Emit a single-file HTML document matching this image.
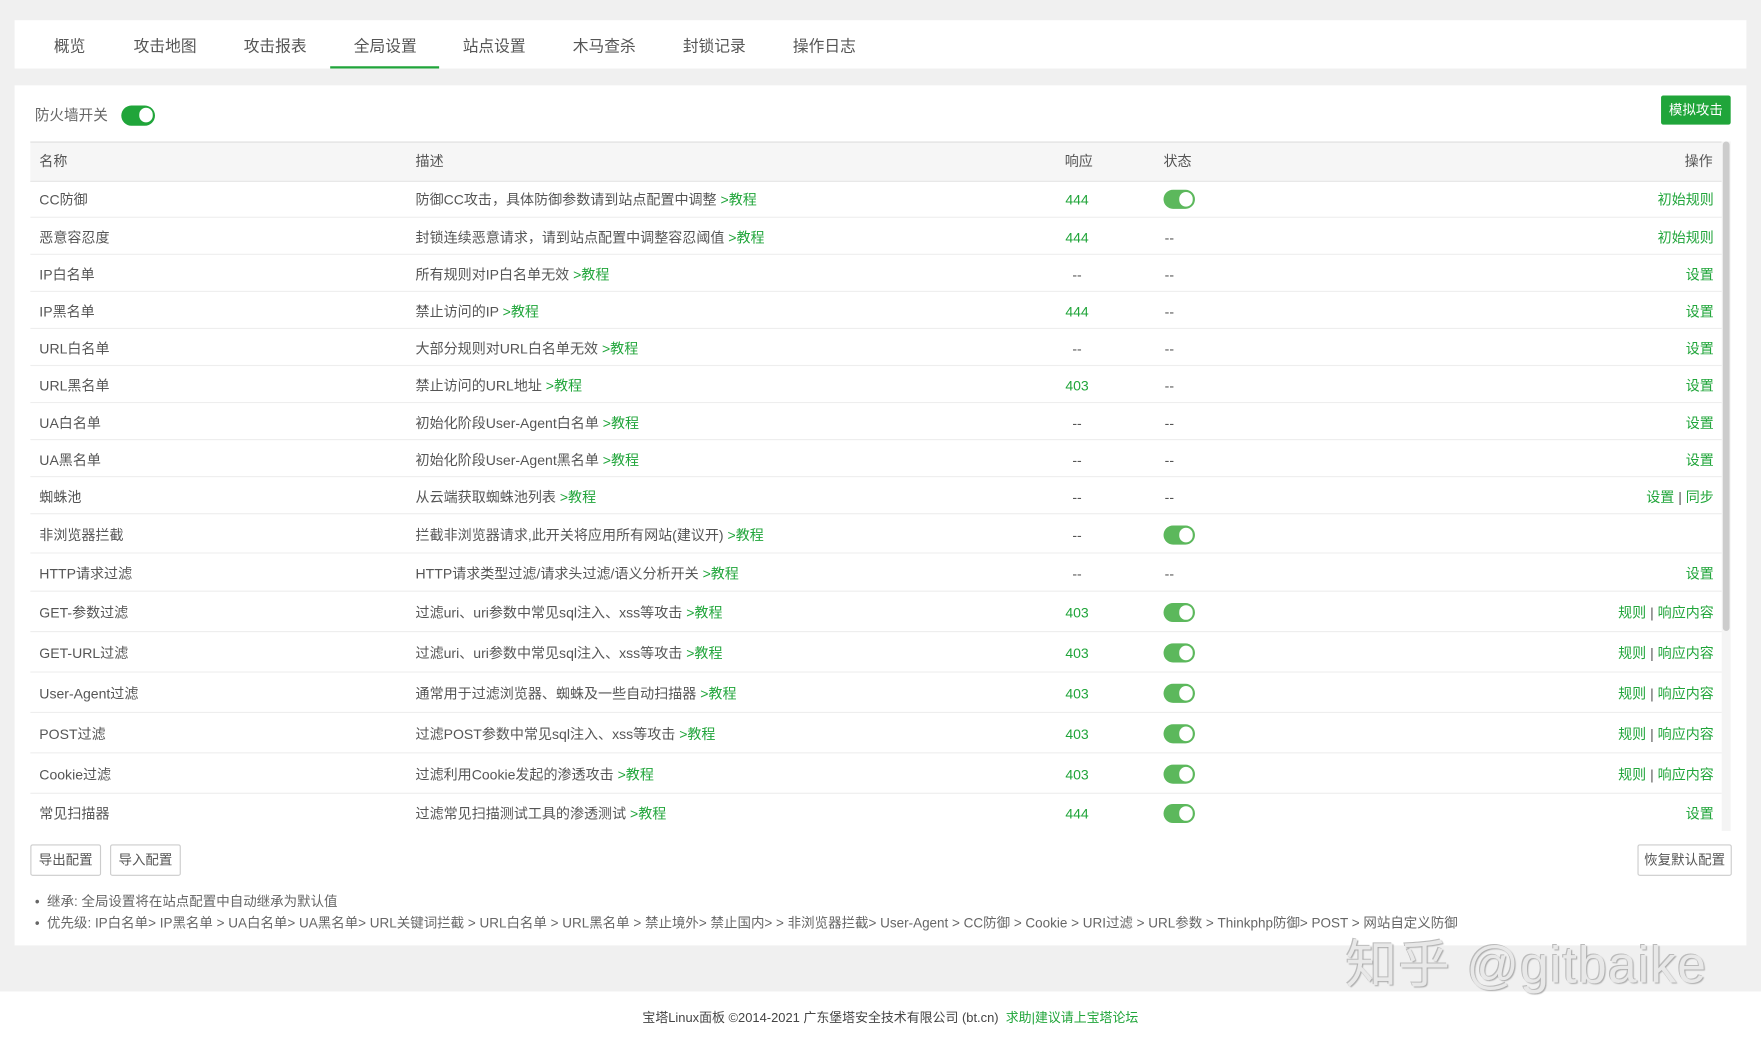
<!DOCTYPE html>
<html><head><meta charset="utf-8"><style>
html,body{margin:0;padding:0;width:1761px;height:1042px;overflow:hidden;background:#f0f0f0}
#w{position:absolute;left:0;top:0;width:1568px;height:928px;transform:scale(1.12309,1.12284);transform-origin:0 0;font-family:"Liberation Sans","Noto Sans CJK SC",sans-serif;font-size:12.5px;line-height:16px;color:#555}
.a{position:absolute;white-space:nowrap}
.g{color:#20a53a}
.tab{position:absolute;top:33px;font-size:14px;color:#555;transform:translateX(-50%)}
.tg{position:absolute;width:28px;height:17px;border-radius:9px;background:#5cb85c}
.tg::after{content:"";position:absolute;right:2px;top:2px;width:12px;height:13px;border-radius:7px;background:#fff}
.row{position:absolute;left:27px;width:1506px;border-bottom:1px solid #eee}
.btn{position:absolute;top:752px;height:26px;border:1px solid #ccc;border-radius:2px;background:#fff;font-size:12px;color:#555;line-height:26px;text-align:center}
</style></head><body><div id="w">
<div class="a" style="left:13px;top:18px;width:1542px;height:43px;background:#fff"></div>
<div class="tab" style="left:62px">概览</div>
<div class="tab" style="left:147px">攻击地图</div>
<div class="tab" style="left:245px">攻击报表</div>
<div class="tab g" style="left:343px">全局设置</div>
<div class="a" style="left:294px;top:59px;width:97px;height:2px;background:#20a53a"></div>
<div class="tab" style="left:440px">站点设置</div>
<div class="tab" style="left:538px">木马查杀</div>
<div class="tab" style="left:636px">封锁记录</div>
<div class="tab" style="left:734px">操作日志</div>

<div class="a" style="left:13px;top:76px;width:1542px;height:766px;background:#fff"></div>
<div class="a" style="left:31px;top:95px;font-size:13px;color:#666">防火墙开关</div>
<div class="tg" style="left:108px;top:94px;width:30px;height:18px;background:#20a53a"></div>
<div class="a" style="left:1479px;top:85px;width:62px;height:26px;background:#20a53a;border-radius:2px;color:#fff;font-size:12px;line-height:26px;text-align:center">模拟攻击</div>

<div class="a" style="left:27px;top:126px;width:1506px;height:34px;background:#f6f6f6;border-top:1px solid #ddd;border-bottom:1px solid #e6e6e6"></div>
<div class="a" style="left:1533px;top:126px;width:8px;height:614px;background:#f4f4f4"></div>
<div class="a" style="left:1534px;top:126px;width:6px;height:436px;background:#ccc;border-radius:3px"></div>
<div class="a" style="left:35px;top:136px">名称</div>
<div class="a" style="left:370px;top:136px">描述</div>
<div class="a" style="left:948px;top:136px">响应</div>
<div class="a" style="left:1036px;top:136px">状态</div>
<div class="a" style="left:1500px;top:136px">操作</div>

<div id="rows"></div>
<script>
var R=[
["CC防御","防御CC攻击，具体防御参数请到站点配置中调整","444",1,"初始规则",160,194],
["恶意容忍度","封锁连续恶意请求，请到站点配置中调整容忍阈值","444",0,"初始规则",194,227],
["IP白名单","所有规则对IP白名单无效","--",0,"设置",227,260],
["IP黑名单","禁止访问的IP","444",0,"设置",260,293],
["URL白名单","大部分规则对URL白名单无效","--",0,"设置",293,326],
["URL黑名单","禁止访问的URL地址","403",0,"设置",326,359],
["UA白名单","初始化阶段User-Agent白名单","--",0,"设置",359,392],
["UA黑名单","初始化阶段User-Agent黑名单","--",0,"设置",392,425],
["蜘蛛池","从云端获取蜘蛛池列表","--",0,"设置 <span style='color:#555'>|</span> 同步",425,458],
["非浏览器拦截","拦截非浏览器请求,此开关将应用所有网站(建议开)","--",1,"",458,493],
["HTTP请求过滤","HTTP请求类型过滤/请求头过滤/语义分析开关","--",0,"设置",493,527],
["GET-参数过滤","过滤uri、uri参数中常见sql注入、xss等攻击","403",1,"规则 <span style='color:#555'>|</span> 响应内容",527,563],
["GET-URL过滤","过滤uri、uri参数中常见sql注入、xss等攻击","403",1,"规则 <span style='color:#555'>|</span> 响应内容",563,599],
["User-Agent过滤","通常用于过滤浏览器、蜘蛛及一些自动扫描器","403",1,"规则 <span style='color:#555'>|</span> 响应内容",599,635],
["POST过滤","过滤POST参数中常见sql注入、xss等攻击","403",1,"规则 <span style='color:#555'>|</span> 响应内容",635,671],
["Cookie过滤","过滤利用Cookie发起的渗透攻击","403",1,"规则 <span style='color:#555'>|</span> 响应内容",671,707],
["常见扫描器","过滤常见扫描测试工具的渗透测试","444",1,"设置",707,740]];
var h="";
R.forEach(function(r,i){
var c=(r[5]+r[6])/2, t=c-7;
if(i<R.length-1)h+='<div class="row" style="top:'+r[5]+'px;height:'+(r[6]-r[5]-1)+'px"></div>';
h+='<div class="a" style="left:35px;top:'+t+'px">'+r[0]+'</div>';
h+='<div class="a" style="left:370px;top:'+t+'px">'+r[1]+' <span class="g">&gt;教程</span></div>';
h+='<div class="a '+(r[2]=="--"?"":"g")+'" style="left:948px;top:'+t+'px;width:22px;text-align:center">'+r[2]+'</div>';
h+=r[3]?'<div class="tg" style="left:1036px;top:'+(c-8)+'px"></div>':'<div class="a" style="left:1037px;top:'+t+'px">--</div>';
h+='<div class="a g" style="right:'+(1568-1526)+'px;top:'+t+'px">'+r[4]+'</div>';
});
document.getElementById("rows").innerHTML=h;
</script>

<div class="btn" style="left:27px;width:61px">导出配置</div>
<div class="btn" style="left:98px;width:61px">导入配置</div>
<div class="btn" style="left:1458px;width:82px">恢复默认配置</div>
<div class="a" style="left:31px;top:795px;font-size:12px;color:#666">•&nbsp; 继承: 全局设置将在站点配置中自动继承为默认值</div>
<div class="a" style="left:31px;top:814px;font-size:12px;color:#666">•&nbsp; 优先级: IP白名单&gt; IP黑名单 &gt; UA白名单&gt; UA黑名单&gt; URL关键词拦截 &gt; URL白名单 &gt; URL黑名单 &gt; 禁止境外&gt; 禁止国内&gt; &gt; 非浏览器拦截&gt; User-Agent &gt; CC防御 &gt; Cookie &gt; URI过滤 &gt; URL参数 &gt; Thinkphp防御&gt; POST &gt; 网站自定义防御</div>

<div class="a" style="left:0;top:883px;width:1568px;height:45px;background:#fff"></div>
<div class="a" style="left:572px;top:899px;font-size:11.5px;color:#444">宝塔Linux面板 ©2014-2021 广东堡塔安全技术有限公司 (bt.cn) &nbsp;<span class="g">求助|建议请上宝塔论坛</span></div>
<div class="a" style="left:1198px;top:832px;font-size:46px;line-height:54px;color:#e8e8e8;text-shadow:1px 1px 1px #aaa,-1px -1px 0 #bbb;letter-spacing:1px">知乎 @gitbaike</div>
</div></body></html>
